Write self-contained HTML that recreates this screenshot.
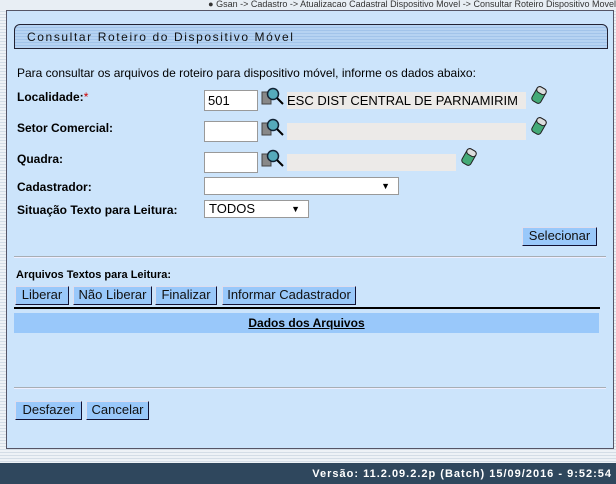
<!DOCTYPE html>
<html><head><meta charset="utf-8"><style>
*{box-sizing:border-box;margin:0;padding:0}
body{width:616px;height:484px;position:relative;overflow:hidden;font-family:"Liberation Sans",Arial,sans-serif;font-size:12px;color:#000;
background:repeating-linear-gradient(#eef2f6 0 2px,#d4dde6 2px 3px);}
.a{position:absolute}
.bc{left:0;top:0;width:616px;height:10px;background:#e8eef4;font-size:9px;color:#333;text-align:right;line-height:9px;white-space:nowrap}
.panel{left:6px;top:10px;width:608px;height:439px;background:#cce4fb;border:1px solid #556;}
.title{left:14px;top:24px;width:594px;height:25px;border:1px solid #223;border-radius:6px 6px 0 0;
background:repeating-linear-gradient(#b6d3f2 0 2px,#a2c4ea 2px 3px);font-size:12px;letter-spacing:1.6px;color:#111;padding:5px 0 0 12px}
.lbl{font-weight:bold;font-size:12px;left:17px}
.in{background:#fff;border:1px solid #999;height:21px;font-size:13px;padding:2px 3px}
.ro{background:#eceae8;height:17px}
.btn{background:#99c8fa;border:1px solid #113;height:19px;font-size:13px;line-height:16px;color:#111;border-top-color:#dde;border-left-color:#dde;text-align:center}
.hr{height:2px;background:#a8aeb4;border-bottom:1px solid #eef}
.sel{background:#fff;border:1px solid #999;height:18px;font-size:13px;padding:0 4px;line-height:16px}
.arr{position:absolute;right:8px;top:0;font-size:9px}
</style></head><body>
<div class="a bc">● Gsan -&gt; Cadastro -&gt; Atualizacao Cadastral Dispositivo Movel -&gt; Consultar Roteiro Dispositivo Movel</div>
<div class="a panel"></div>
<div class="a title">Consultar Roteiro do Dispositivo Móvel</div>
<div class="a" style="left:17px;top:66px;font-size:12px">Para consultar os arquivos de roteiro para dispositivo móvel, informe os dados abaixo:</div>
<div class="a lbl" style="top:90px">Localidade:<span style="color:#c00;font-weight:normal">*</span></div>
<div class="a lbl" style="top:121px">Setor Comercial:</div>
<div class="a lbl" style="top:152px">Quadra:</div>
<div class="a lbl" style="top:180px">Cadastrador:</div>
<div class="a lbl" style="top:203px">Situação Texto para Leitura:</div>
<div class="a in" style="left:204px;top:90px;width:54px">501</div>
<div class="a in" style="left:204px;top:121px;width:54px"></div>
<div class="a in" style="left:204px;top:152px;width:54px"></div>
<svg class="a" style="left:261px;top:86px" width="24" height="22"><rect x="1" y="6" width="9" height="12" fill="#888" stroke="#444"/><circle cx="12" cy="8" r="5.5" fill="#5ab" stroke="#123" stroke-width="1.5"/><line x1="16" y1="12" x2="22" y2="18" stroke="#000" stroke-width="2"/></svg>
<svg class="a" style="left:261px;top:117px" width="24" height="22"><rect x="1" y="6" width="9" height="12" fill="#888" stroke="#444"/><circle cx="12" cy="8" r="5.5" fill="#5ab" stroke="#123" stroke-width="1.5"/><line x1="16" y1="12" x2="22" y2="18" stroke="#000" stroke-width="2"/></svg>
<svg class="a" style="left:261px;top:148px" width="24" height="22"><rect x="1" y="6" width="9" height="12" fill="#888" stroke="#444"/><circle cx="12" cy="8" r="5.5" fill="#5ab" stroke="#123" stroke-width="1.5"/><line x1="16" y1="12" x2="22" y2="18" stroke="#000" stroke-width="2"/></svg>
<div class="a ro" style="left:287px;top:92px;width:239px;font-size:13px;line-height:17px;white-space:nowrap;overflow:hidden">ESC DIST CENTRAL DE PARNAMIRIM</div>
<div class="a ro" style="left:287px;top:123px;width:239px"></div>
<div class="a ro" style="left:287px;top:154px;width:169px"></div>
<svg class="a" style="left:529px;top:84px" width="20" height="22"><g transform="rotate(30 10 11)"><rect x="5" y="3" width="10" height="16" rx="3" fill="#4a7" stroke="#222"/><rect x="5" y="3" width="10" height="6" rx="3" fill="#ddd" stroke="#222"/></g></svg>
<svg class="a" style="left:529px;top:115px" width="20" height="22"><g transform="rotate(30 10 11)"><rect x="5" y="3" width="10" height="16" rx="3" fill="#4a7" stroke="#222"/><rect x="5" y="3" width="10" height="6" rx="3" fill="#ddd" stroke="#222"/></g></svg>
<svg class="a" style="left:459px;top:146px" width="20" height="22"><g transform="rotate(30 10 11)"><rect x="5" y="3" width="10" height="16" rx="3" fill="#4a7" stroke="#222"/><rect x="5" y="3" width="10" height="6" rx="3" fill="#ddd" stroke="#222"/></g></svg>
<div class="a sel" style="left:204px;top:177px;width:195px"><span class="arr">▼</span></div>
<div class="a sel" style="left:204px;top:200px;width:105px">TODOS<span class="arr">▼</span></div>
<div class="a btn" style="left:522px;top:227px;width:75px">Selecionar</div>
<div class="a hr" style="left:14px;top:256px;width:592px"></div>
<div class="a" style="left:16px;top:269px;font-weight:bold;font-size:11px">Arquivos Textos para Leitura:</div>
<div class="a btn" style="left:15px;top:286px;width:54px">Liberar</div>
<div class="a btn" style="left:73px;top:286px;width:79px">Não Liberar</div>
<div class="a btn" style="left:155px;top:286px;width:62px">Finalizar</div>
<div class="a btn" style="left:222px;top:286px;width:134px">Informar Cadastrador</div>
<div class="a" style="left:14px;top:307px;width:586px;height:2px;background:#000"></div>
<div class="a" style="left:14px;top:313px;width:585px;height:20px;background:#99c8fa;text-align:center;font-weight:bold;text-decoration:underline;line-height:20px">Dados dos Arquivos</div>
<div class="a hr" style="left:14px;top:387px;width:592px"></div>
<div class="a btn" style="left:15px;top:401px;width:67px">Desfazer</div>
<div class="a btn" style="left:86px;top:401px;width:63px">Cancelar</div>
<div class="a" style="left:0;top:463px;width:616px;height:21px;background:#2f475d;color:#fff;font-weight:bold;font-size:11px;letter-spacing:1px;text-align:right;padding:5px 4px 0 0">Versão: 11.2.09.2.2p (Batch) 15/09/2016 - 9:52:54</div>
</body></html>
